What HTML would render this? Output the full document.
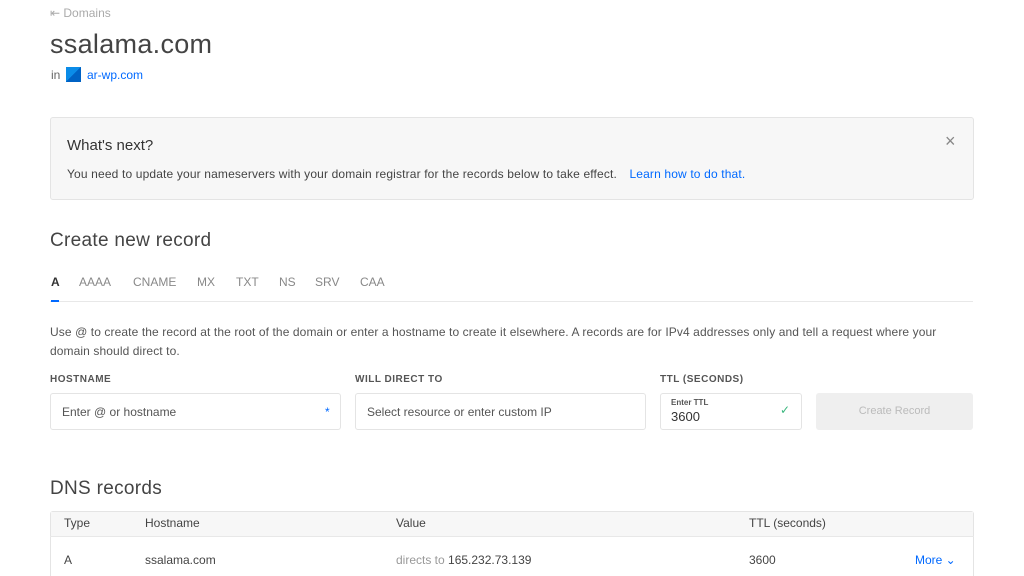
<!DOCTYPE html>
<html><head><style>
*{margin:0;padding:0;box-sizing:border-box}
html,body{width:1024px;height:576px;overflow:hidden}
body{background:#fff;font-family:"Liberation Sans",sans-serif;color:#333;position:relative}
.a{position:absolute;white-space:nowrap}
.box{position:absolute;border:1px solid #e4e4e4;border-radius:3px;background:#fff}
.lbl{font-size:10px;font-weight:bold;color:#555;letter-spacing:.5px}
.t{position:absolute;top:275px;font-size:12px;color:#888}
</style></head><body>
<div class="a" style="left:50px;top:6px;font-size:12px;color:#aaa">&#8676; Domains</div>
<div class="a" style="left:50px;top:29px;font-size:27px;color:#444;letter-spacing:.3px">ssalama.com</div>
<div class="a" style="left:51px;top:68px;font-size:12px;color:#666">in</div>
<div class="a" style="left:66px;top:67px;width:15px;height:15px;background:linear-gradient(135deg,#0b8ce8 50%,#0062c4 50%)"></div>
<div class="a" style="left:87px;top:68px;font-size:12px;color:#0069ff">ar-wp.com</div>

<div class="box" style="left:50px;top:117px;width:924px;height:83px;background:#f7f7f7"></div>
<div class="a" style="left:67px;top:137px;font-size:15px;color:#333">What's next?</div>
<div class="a" style="left:67px;top:167px;font-size:12px;color:#444;letter-spacing:.15px">You need to update your nameservers with your domain registrar for the records below to take effect. <span style="color:#0069ff;margin-left:9px">Learn how to do that.</span></div>
<div class="a" style="left:945px;top:131px;font-size:18px;color:#888">&#215;</div>

<div class="a" style="left:50px;top:230px;font-size:19px;color:#444;letter-spacing:.3px">Create new record</div>
<div class="t" style="left:51px;color:#333;font-weight:bold">A</div>
<div class="t" style="left:79px">AAAA</div>
<div class="t" style="left:133px">CNAME</div>
<div class="t" style="left:197px">MX</div>
<div class="t" style="left:236px">TXT</div>
<div class="t" style="left:279px">NS</div>
<div class="t" style="left:315px">SRV</div>
<div class="t" style="left:360px">CAA</div>
<div class="a" style="left:50px;top:301px;width:923px;height:1px;background:#e8e8e8"></div>
<div class="a" style="left:51px;top:300px;width:8px;height:2px;background:#0069ff"></div>
<div class="a" style="left:50px;top:323px;font-size:12px;color:#555;line-height:19px;white-space:normal;width:905px;letter-spacing:.1px">Use @ to create the record at the root of the domain or enter a hostname to create it elsewhere. A records are for IPv4 addresses only and tell a request where your domain should direct to.</div>

<div class="a lbl" style="left:50px;top:374px">HOSTNAME</div>
<div class="a lbl" style="left:355px;top:374px">WILL DIRECT TO</div>
<div class="a lbl" style="left:660px;top:374px">TTL (SECONDS)</div>
<div class="box" style="left:50px;top:393px;width:291px;height:37px"></div>
<div class="a" style="left:62px;top:405px;font-size:12px;color:#555">Enter @ or hostname</div>
<div class="a" style="left:325px;top:405px;font-size:12px;color:#0069ff">*</div>
<div class="box" style="left:355px;top:393px;width:291px;height:37px"></div>
<div class="a" style="left:367px;top:405px;font-size:12px;color:#555">Select resource or enter custom IP</div>
<div class="box" style="left:660px;top:393px;width:142px;height:37px"></div>
<div class="a" style="left:671px;top:398px;font-size:8px;font-weight:bold;color:#555">Enter TTL</div>
<div class="a" style="left:671px;top:409px;font-size:13px;color:#333">3600</div>
<div class="a" style="left:780px;top:403px;font-size:12px;color:#3bb77e">&#10003;</div>
<div class="a" style="left:816px;top:393px;width:157px;height:37px;background:#efefef;border-radius:3px;font-size:11px;color:#bbb;text-align:center;line-height:37px">Create Record</div>

<div class="a" style="left:50px;top:478px;font-size:19px;color:#444;letter-spacing:.3px">DNS records</div>
<div class="box" style="left:50px;top:511px;width:924px;height:80px"></div>
<div class="a" style="left:51px;top:512px;width:922px;height:24px;background:#f7f7f7"></div>
<div class="a" style="left:50px;top:536px;width:924px;height:1px;background:#e8e8e8"></div>
<div class="a" style="left:64px;top:516px;font-size:12px;color:#444">Type</div>
<div class="a" style="left:145px;top:516px;font-size:12px;color:#444">Hostname</div>
<div class="a" style="left:396px;top:516px;font-size:12px;color:#444">Value</div>
<div class="a" style="left:749px;top:516px;font-size:12px;color:#444">TTL (seconds)</div>
<div class="a" style="left:64px;top:553px;font-size:12px;color:#444">A</div>
<div class="a" style="left:145px;top:553px;font-size:12px;color:#444">ssalama.com</div>
<div class="a" style="left:396px;top:553px;font-size:12px;color:#999">directs to <span style="color:#444">165.232.73.139</span></div>
<div class="a" style="left:749px;top:553px;font-size:12px;color:#444">3600</div>
<div class="a" style="left:915px;top:553px;font-size:12px;color:#0069ff">More &#8964;</div>
</body></html>
